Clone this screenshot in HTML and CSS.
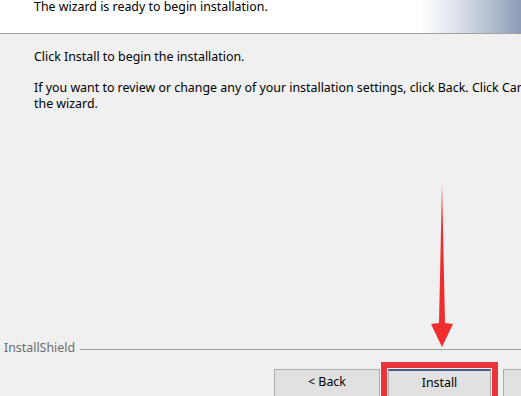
FILE: index.html
```
<!DOCTYPE html>
<html lang="en">
<head>
    <meta charset="UTF-8">
    <title>Ready to Install the Program</title>
    <link rel="stylesheet" href="styles.css">
</head>
<body>
    <div class="wizard">
        <header class="banner">
            <p class="banner-text">The wizard is ready to begin installation.</p>
        </header>
        <main class="content">
            <p>Click Install to begin the installation.</p>
            <p>If you want to review or change any of your installation settings, click Back. Click Cancel to exit the wizard.</p>
        </main>
        <div class="brand">
            <span>InstallShield</span>
            <span class="brand-line"></span>
        </div>
        <div class="buttons">
            <button class="btn">&lt; Back</button>
            <button class="btn default marked">Install</button>
            <button class="btn">Cancel</button>
        </div>
        <!-- annotation arrow pointing at the Install button -->
        <svg class="arrow" width="30" height="170" viewBox="0 0 30 170">
            <polygon points="15,0 18,139 26,140 15,163 4,140 12,139" fill="#f02d2d"/>
        </svg>
    </div>
</body>
</html>
```

FILE: styles.css
```
body {
    margin: 0;
    padding: 0;
    background: #f0f0f0;
    font-family: "Noto Sans", Arial, sans-serif;
    font-size: 12.4px;
    color: #000;
    overflow: hidden;
}

.wizard {
    position: relative;
    height: 396px;
    display: flex;
    flex-direction: column;
}

.banner {
    height: 33px;
    background: linear-gradient(to right, #fff 0, #fff 420px, #dfe4ec 455px, #b4c0d0 490px, #8c9cb6 521px);
    border-bottom: 1px solid #a0a0a0;
}

.banner-text {
    margin: 0;
    padding-left: 34px;
    line-height: 14px;
}

.content {
    padding: 15px 0 0 34px;
    white-space: nowrap;
}

.content p {
    margin: 0 0 15px;
    line-height: 16px;
}

.content p:last-child {
    white-space: normal;
    width: 560px;
}

.brand {
    margin-top: auto;
    display: flex;
    align-items: center;
    gap: 5px;
    padding-left: 4px;
    color: #6d6d6d;
    line-height: 14px;
}

.brand-line {
    flex: 1;
    border-top: 1px solid #a0a0a0;
    margin-top: 2px;
}

.buttons {
    display: flex;
    gap: 8px;
    padding: 14px 0 0 274px;
    height: 27px;
}

.btn {
    flex: none;
    width: 106px;
    height: 30px;
    padding: 0 0 5px;
    background: #e1e1e1;
    border: 1px solid #adadad;
    font-family: inherit;
    font-size: 12.4px;
    color: #000;
}

.btn.default {
    width: 103px;
    margin-right: 4px;
    border-top: 2px solid #4a5a86;
}

.btn.marked {
    outline: 6px solid #ea333b;
    outline-offset: 1px;
}

.arrow {
    position: absolute;
    left: 427px;
    top: 184px;
}
```
